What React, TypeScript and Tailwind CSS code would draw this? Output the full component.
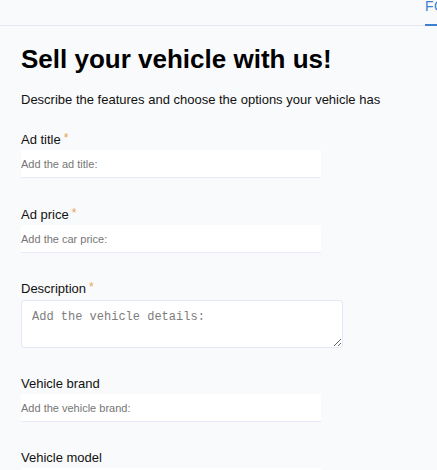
const FIELDS = [
  { label: 'Ad title', placeholder: 'Add the ad title:', required: true, kind: 'input', gap: 'mb-[29px]' },
  { label: 'Ad price', placeholder: 'Add the car price:', required: true, kind: 'input', gap: 'mb-[28px]' },
  { label: 'Description', placeholder: 'Add the vehicle details:', required: true, kind: 'textarea', gap: 'mb-[28px]' },
  { label: 'Vehicle brand', placeholder: 'Add the vehicle brand:', required: false, kind: 'input', gap: 'mb-[28px]' },
  { label: 'Vehicle model', placeholder: 'Add the vehicle model:', required: false, kind: 'input', gap: 'mb-[28px]' },
] as const;

export default function App() {
  return (
    <div
      className="h-[470px] w-full overflow-hidden bg-[#f9fafb] text-[#111]"
      style={{ fontFamily: '"Liberation Sans", Arial, sans-serif' }}
    >
      {/* Tabs */}
      <div className="flex h-[26px] border-b border-[#e7e6f3]">
        <div className="w-[425px] shrink-0" />
        <div className="-mb-px shrink-0 border-b-2 border-[#3f7fcf] pr-4">
          <span className="-mt-[1px] block text-[14px] leading-[14px] tracking-wide text-[#3f7fcf]">FORM</span>
        </div>
      </div>

      {/* Form */}
      <div className="px-[21px]">
        <h1 className="mt-[18px] text-[26px] font-bold leading-[30px] text-black">Sell your vehicle with us!</h1>
        <p className="mt-[18px] text-[13px] leading-[15px]">
          Describe the features and choose the options your vehicle has
        </p>

        <form className="mt-[25px]">
          {FIELDS.map(f => (
            <div key={f.label} className={f.gap}>
              <label className={`block text-[13px] leading-[15px] ${f.kind === 'textarea' ? 'mb-[4px]' : 'mb-[3px]'}`}>
                {f.label}
                {f.required && <span className="ml-[3px] align-top text-[12px] leading-[12px] text-[#e8a355]">*</span>}
              </label>
              {f.kind === 'textarea' ? (
                <textarea
                  placeholder={f.placeholder}
                  className="block h-[48px] w-[322px] rounded-[3px] border border-[#e8e5f5] bg-white px-[10px] pt-[8px] text-[12px] leading-[17px] outline-none placeholder:text-[#7d7d7d]"
                  style={{ fontFamily: '"Liberation Mono", monospace' }}
                />
              ) : (
                <input
                  type="text"
                  placeholder={f.placeholder}
                  className="block h-[28px] w-[300px] border-b border-[#ebe7f8] bg-white px-0 text-[11px] outline-none placeholder:text-[#767676]"
                />
              )}
            </div>
          ))}
        </form>
      </div>
    </div>
  );
}
